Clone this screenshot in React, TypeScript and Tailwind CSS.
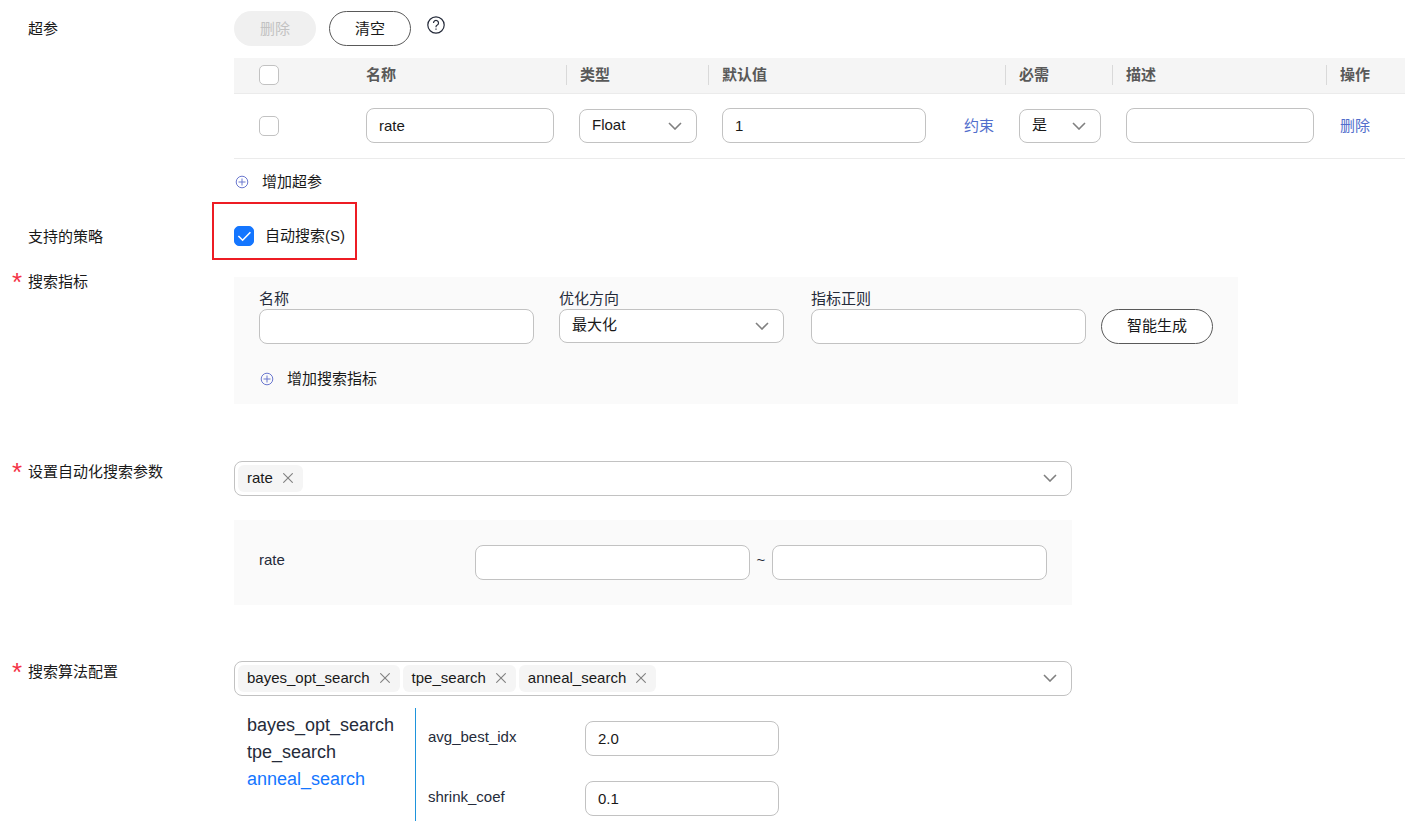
import { useState } from "react";
import type { ComponentProps, ReactNode } from "react";
import clsx from "clsx";

const inputClass =
  "h-[35px] rounded-lg border border-[#c2c2c2] bg-white px-3 text-[15px] text-[#191919] outline-none focus:border-[#1476ff]";

const outlineButton =
  "h-[35px] rounded-full border border-[#595959] bg-white px-[25px] leading-5 text-[#191919]";

function Chevron({ className }: { className?: string }) {
  return (
    <svg
      viewBox="0 0 14 8"
      className={clsx("h-2 w-3.5", className)}
      fill="none"
      stroke="#808080"
      strokeWidth="1.6"
    >
      <path d="M1 1l6 6 6-6" />
    </svg>
  );
}

function Close() {
  return (
    <svg viewBox="0 0 10 10" className="size-2.5" fill="none" stroke="#808080" strokeWidth="1.1">
      <path d="M0.3 0.3l9.4 9.4M9.7 0.3L0.3 9.7" />
    </svg>
  );
}

function Checkbox({ className, ...props }: ComponentProps<"input">) {
  return (
    <span className={clsx("relative block size-5", className)}>
      <input
        type="checkbox"
        className="peer block size-5 appearance-none rounded-[5px] border border-[#c2c2c2] bg-white checked:border-[#1476ff] checked:bg-[#1476ff]"
        {...props}
      />
      <svg
        viewBox="0 0 20 20"
        className="pointer-events-none absolute inset-0 hidden size-5 peer-checked:block"
        fill="none"
        stroke="#fff"
        strokeWidth="1.6"
      >
        <path d="M4.4 10l4.2 4.2 7.8-8" />
      </svg>
    </span>
  );
}

function Select({ className, children, ...props }: ComponentProps<"select">) {
  return (
    <span className={clsx("relative block", className)}>
      <select
        className="block h-[34px] w-full appearance-none rounded-lg border border-[#c2c2c2] bg-white pr-9 pb-0.5 pl-3 text-[15px] text-[#191919] outline-none"
        {...props}
      >
        {children}
      </select>
      <Chevron className="pointer-events-none absolute top-[13px] right-[15px]" />
    </span>
  );
}

function AddButton({ children, className }: { children: ReactNode; className?: string }) {
  return (
    <button
      type="button"
      className={clsx("flex h-5 items-center gap-[13px] pl-px leading-5 text-[#191919]", className)}
    >
      <svg viewBox="0 0 14 14" className="size-3.5" fill="none" stroke="#6b78cf">
        <circle cx="7" cy="7" r="5.8" />
        <path d="M7 3.5v7M3.5 7h7" />
      </svg>
      {children}
    </button>
  );
}

interface FormRowProps {
  label: string;
  required?: boolean;
  className?: string;
  labelClassName?: string;
  children: ReactNode;
}

function FormRow({
  label,
  required,
  className,
  labelClassName = "pt-px",
  children,
}: FormRowProps) {
  return (
    <section className={clsx("flex items-start", className)}>
      <div className={clsx("flex w-[234px] shrink-0 pl-3 leading-5 text-[#191919]", labelClassName)}>
        <span className="h-5 w-4 text-[26px] leading-5 text-[#f43146]">{required && "*"}</span>
        <span>{label}</span>
      </div>
      <div className="min-w-0 flex-1">{children}</div>
    </section>
  );
}

interface TagSelectProps {
  label: string;
  tags: string[];
  onRemove: (tag: string) => void;
}

function TagSelect({ label, tags, onRemove }: TagSelectProps) {
  return (
    <div className="flex h-[35px] max-w-[838px] items-center gap-[3px] rounded-lg border border-[#c2c2c2] bg-white pr-3.5 pl-[3px]">
      {tags.map((tag) => (
        <span
          key={tag}
          className="flex h-[27px] items-center gap-2.5 rounded-md bg-[#f5f5f5] pr-2.5 pl-[9px] text-[#191919]"
        >
          {tag}
          <button type="button" aria-label={`移除 ${tag}`} onClick={() => onRemove(tag)}>
            <Close />
          </button>
        </span>
      ))}
      <input
        role="combobox"
        aria-expanded={false}
        aria-label={label}
        className="h-full min-w-0 flex-1 outline-none"
      />
      <Chevron />
    </div>
  );
}

const columns = ["名称", "类型", "默认值", "必需", "描述", "操作"];

const algorithms = ["bayes_opt_search", "tpe_search", "anneal_search"];

const algorithmParams = [
  { name: "avg_best_idx", value: "2.0" },
  { name: "shrink_coef", value: "0.1" },
];

function HyperParamTable() {
  return (
    <table className="mt-3 w-full table-fixed border-collapse text-left">
      <colgroup>
        <col className="w-[119px]" />
        <col className="w-[214px]" />
        <col className="w-[142px]" />
        <col className="w-[297px]" />
        <col className="w-[107px]" />
        <col className="w-[214px]" />
        <col />
      </colgroup>
      <thead>
        <tr className="h-[35px] border-b border-[#ebebeb] bg-[#f5f5f5]">
          <th className="pl-[25px]">
            <Checkbox aria-label="全选" />
          </th>
          {columns.map((name, i) => (
            <th key={name} className="font-bold text-[#595959]">
              <div
                className={clsx(
                  "border-r pl-[13px] leading-5",
                  i < columns.length - 1 ? "border-[#d9d9d9]" : "border-transparent"
                )}
              >
                {name}
              </div>
            </th>
          ))}
        </tr>
      </thead>
      <tbody>
        <tr className="h-[65px] border-b border-[#ebebeb]">
          <td className="pl-[25px]">
            <Checkbox aria-label="选择 rate" />
          </td>
          <td className="px-[13px]">
            <input aria-label="名称" defaultValue="rate" className={clsx(inputClass, "block w-full")} />
          </td>
          <td className="px-3">
            <Select aria-label="类型" defaultValue="Float">
              <option>Float</option>
              <option>Integer</option>
              <option>String</option>
            </Select>
          </td>
          <td className="pr-3 pl-[13px]">
            <div className="flex items-center justify-between">
              <input aria-label="默认值" defaultValue="1" className={clsx(inputClass, "w-[204px]")} />
              <a href="#constraint" className="text-[#526ecc]">
                约束
              </a>
            </div>
          </td>
          <td className="pr-3 pl-[13px]">
            <Select aria-label="必需" defaultValue="是">
              <option>是</option>
              <option>否</option>
            </Select>
          </td>
          <td className="px-[13px]">
            <input aria-label="描述" className={clsx(inputClass, "block w-full")} />
          </td>
          <td className="pl-[13px]">
            <a href="#delete" className="text-[#526ecc]">
              删除
            </a>
          </td>
        </tr>
      </tbody>
    </table>
  );
}

export default function App() {
  const [searchParams, setSearchParams] = useState(["rate"]);
  const [selected, setSelected] = useState(algorithms);
  const [active, setActive] = useState("anneal_search");
  const [autoSearch, setAutoSearch] = useState(true);

  return (
    <main className="bg-white pt-[11px] font-['Liberation_Sans','Noto_Sans_CJK_SC',sans-serif] text-[15px] leading-5 text-[#252b3a]">
      <FormRow label="超参" labelClassName="pt-2">
        <div className="flex items-start gap-[13px]">
          <button
            type="button"
            disabled
            className="h-[35px] rounded-full bg-[#f0f0f0] px-[26px] text-[#c2c2c2]"
          >
            删除
          </button>
          <button type="button" className={outlineButton}>
            清空
          </button>
          <button type="button" aria-label="帮助" className="ml-[3px] pt-[5px]">
            <svg viewBox="0 0 18 18" className="size-[18px]" fill="none" stroke="#252b3a" strokeWidth="1.2">
              <circle cx="9" cy="9" r="8.2" />
              <path d="M6.5 7a2.5 2.5 0 1 1 3.8 2.1C9.4 9.6 9 10 9 10.8v.4" />
              <path d="M9 12.4v1.4" />
            </svg>
          </button>
        </div>
        <HyperParamTable />
        <AddButton className="mt-[13px]">增加超参</AddButton>
      </FormRow>

      <FormRow label="支持的策略" className="mt-[34px]">
        <label className="relative inline-flex items-center gap-[11px] align-top text-[#191919]">
          <Checkbox checked={autoSearch} onChange={(e) => setAutoSearch(e.target.checked)} />
          自动搜索(S)
          <span className="pointer-events-none absolute -top-6 -right-3 -bottom-3.5 -left-[22px] border-2 border-[#ed1c24]" />
        </label>
      </FormRow>

      <FormRow label="搜索指标" required className="mt-6">
        <div className="mt-1.5 max-w-[1004px] bg-[#fafafa] px-[25px] pt-3 pb-[15px]">
          <div className="flex items-end">
            <label className="w-[275px]">
              名称
              <input className={clsx(inputClass, "block w-full")} />
            </label>
            <label className="ml-[25px] w-[225px]">
              优化方向
              <Select defaultValue="最大化" className="pb-px">
                <option>最大化</option>
                <option>最小化</option>
              </Select>
            </label>
            <label className="ml-[27px] w-[275px]">
              指标正则
              <input className={clsx(inputClass, "block w-full")} />
            </label>
            <button type="button" className={clsx(outlineButton, "ml-[15px]")}>
              智能生成
            </button>
          </div>
          <AddButton className="mt-[25px]">增加搜索指标</AddButton>
        </div>
      </FormRow>

      <FormRow label="设置自动化搜索参数" required className="mt-[57px]">
        <TagSelect
          label="设置自动化搜索参数"
          tags={searchParams}
          onRemove={(tag) => setSearchParams(searchParams.filter((t) => t !== tag))}
        />
        <div className="mt-6 flex max-w-[838px] items-center bg-[#fafafa] p-[25px]">
          <span className="flex-1 pb-1">rate</span>
          <input aria-label="rate 最小值" className={clsx(inputClass, "w-[275px]")} />
          <span className="w-[22px] pb-1 text-center">~</span>
          <input aria-label="rate 最大值" className={clsx(inputClass, "w-[275px]")} />
        </div>
      </FormRow>

      <FormRow label="搜索算法配置" required className="mt-14">
        <TagSelect
          label="搜索算法配置"
          tags={selected}
          onRemove={(tag) => setSelected(selected.filter((t) => t !== tag))}
        />
        <div className="mt-3 flex">
          <div className="flex w-[181px] flex-col items-start pt-1 pl-[13px] text-lg leading-[27px]">
            {algorithms.map((name) => (
              <button
                key={name}
                type="button"
                onClick={() => setActive(name)}
                className={clsx(name === active && "text-[#1476ff]")}
              >
                {name}
              </button>
            ))}
          </div>
          <div className="flex flex-col gap-[25px] border-l border-[#1e94dc] pt-[13px] pb-[5px] pl-3">
            {algorithmParams.map(({ name, value }) => (
              <label key={name} className="flex items-center">
                <span className="w-[157px] pb-0.5">{name}</span>
                <input defaultValue={value} className={clsx(inputClass, "w-[194px]")} />
              </label>
            ))}
          </div>
        </div>
      </FormRow>
    </main>
  );
}
